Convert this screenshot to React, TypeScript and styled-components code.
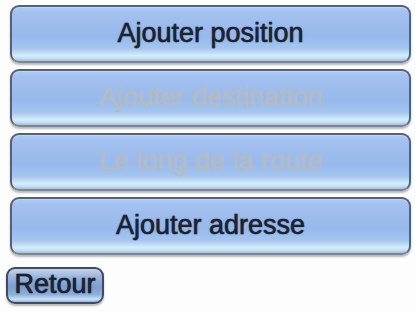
import React from "react";
import styled, { createGlobalStyle } from "styled-components";

const Global = createGlobalStyle`
  html, body { margin: 0; padding: 0; background: #fdfdfd; }
  body { font-family: "Liberation Sans", Arial, sans-serif; }
`;

const Page = styled.div`
  width: 415px;
  height: 312px;
  box-sizing: border-box;
  padding: 5px 4px 0 6px;
  display: flex;
  flex-direction: column;
  overflow: hidden;
`;

const Menu = styled.div`
  display: flex;
  flex-direction: column;
  gap: 6px;
  margin-left: 4px;
`;

const MenuButton = styled.button<{ $disabled?: boolean }>`
  height: 58px;
  box-sizing: border-box;
  width: 100%;
  border: 2px solid #55607a;
  border-bottom-color: #7d8598;
  border-radius: 9px;
  box-shadow: 0 2px 2px rgba(60, 60, 70, 0.35), inset 0 1px 0 #c4d6f2;
  background: linear-gradient(
    to bottom,
    #b2c8ee 0%,
    #a2c0ef 12%,
    #98b9ec 55%,
    #a3c5ef 76%,
    #d2eefa 90%,
    #c0dcf2 96%,
    #a4b8d4 100%
  );
  font-family: "Liberation Sans", Arial, sans-serif;
  font-size: 27px;
  color: ${(p) => (p.$disabled ? "#b3bcc6" : "#1b2234")};
  -webkit-text-stroke: ${(p) => (p.$disabled ? "0.3px #aeb8c2" : "0.4px #1b2234")};
  text-shadow: ${(p) =>
    p.$disabled
      ? "0 0 2px rgba(190,200,210,0.8)"
      : "0 0 1px rgba(20,30,50,0.7), 0 0 2px rgba(120,140,170,0.6)"};
  display: flex;
  align-items: center;
  justify-content: center;
  padding: 0 0 2px 0;
  cursor: default;
`;

const BackButton = styled.button`
  margin-top: 12px;
  align-self: flex-start;
  width: 98px;
  height: 37px;
  box-sizing: border-box;
  border: 2px solid #3e4a66;
  border-radius: 9px;
  box-shadow: 0 2px 2px rgba(60, 60, 70, 0.35);
  background: linear-gradient(
    to bottom,
    #c6d4ea 0%,
    #9ab4dc 25%,
    #7e9ccc 55%,
    #8eb0dc 78%,
    #c8e2f6 92%,
    #9ab0cc 100%
  );
  font-family: "Liberation Sans", Arial, sans-serif;
  font-size: 27px;
  color: #1a2234;
  -webkit-text-stroke: 0.5px #1a2234;
  text-shadow: 0 0 1px rgba(20, 30, 50, 0.8), 0 0 2px rgba(120, 140, 170, 0.6);
  display: flex;
  align-items: center;
  justify-content: center;
  padding: 0 0 2px 0;
  cursor: default;
`;

const items = [
  { label: "Ajouter position", disabled: false },
  { label: "Ajouter destination", disabled: true },
  { label: "Le long de la route", disabled: true },
  { label: "Ajouter adresse", disabled: false },
];

export default function App() {
  return (
    <>
      <Global />
      <Page>
        <Menu>
          {items.map((it) => (
            <MenuButton key={it.label} $disabled={it.disabled}>
              {it.label}
            </MenuButton>
          ))}
        </Menu>
        <BackButton>Retour</BackButton>
      </Page>
    </>
  );
}
